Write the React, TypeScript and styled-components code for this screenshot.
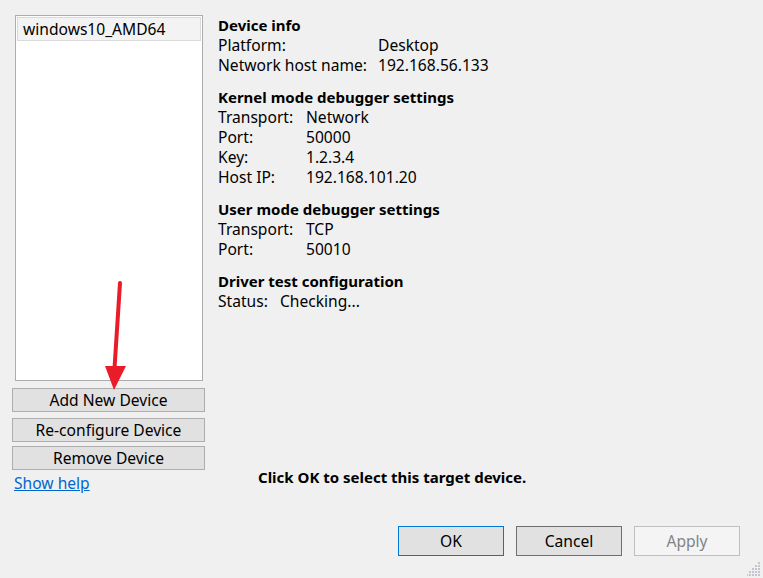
import styled, { createGlobalStyle } from 'styled-components'

const GlobalStyle = createGlobalStyle`
  html, body {
    margin: 0;
    padding: 0;
    background: #f0f0f0;
  }
  body {
    font-family: 'Noto Sans', 'Segoe UI', sans-serif;
    font-size: 15.6px;
    color: #000;
  }
`

const Window = styled.div`
  position: relative;
  height: 578px;
  display: flex;
  flex-direction: column;
  overflow: hidden;
`

const Main = styled.div`
  flex: 1;
  display: grid;
  grid-template-columns: 192px 1fr;
  column-gap: 14px;
  padding: 15px 0 0 12px;
`

const LeftColumn = styled.div`
  position: relative;
  display: flex;
  flex-direction: column;
`

const ListBox = styled.div`
  margin: 0 1px 0 3px;
  height: 366px;
  box-sizing: border-box;
  background: #fff;
  border: 1px solid #adadad;
  padding: 1px;
`

const ListItem = styled.div<{ $selected?: boolean }>`
  height: 24px;
  box-sizing: border-box;
  line-height: 22px;
  padding-left: 5px;
  background: ${(p) => (p.$selected ? '#f3f3f3' : 'transparent')};
  border: 1px solid ${(p) => (p.$selected ? '#dadada' : 'transparent')};
  white-space: nowrap;
`

const SideButton = styled.button<{ $gap: number }>`
  margin-top: ${(p) => p.$gap}px;
  height: 24px;
  width: 193px;
  padding: 0;
  font: inherit;
  color: #000;
  background: #e1e1e1;
  border: 1px solid #adadad;
  line-height: 20px;
`

const HelpLink = styled.a`
  margin: 3px 0 0 2px;
  color: #0066cc;
  text-decoration: underline;
  line-height: 20px;
  cursor: pointer;
  align-self: flex-start;
`

const Arrow = styled.svg`
  position: absolute;
  left: 90px;
  top: 265px;
  pointer-events: none;
`

const RightColumn = styled.div`
  display: flex;
  flex-direction: column;
`

const Section = styled.div`
  margin-bottom: 12px;
`

const SectionTitle = styled.div`
  font-size: 15px;
  font-weight: 700;
  line-height: 20px;
`

const Row = styled.div<{ $labelWidth: number }>`
  display: grid;
  grid-template-columns: ${(p) => p.$labelWidth}px auto;
  line-height: 20px;
  white-space: nowrap;
`

const Message = styled.div`
  margin-top: auto;
  margin-left: 40px;
  margin-bottom: 10px;
  font-size: 15px;
  font-weight: 700;
  line-height: 20px;
`

const Footer = styled.div`
  display: flex;
  justify-content: flex-end;
  gap: 12px;
  padding: 0 23px 22px 0;
  margin-top: 29px;
`

const DialogButton = styled.button<{ $variant: 'default' | 'normal' | 'disabled' }>`
  width: 106px;
  height: 30px;
  padding: 0;
  font: inherit;
  color: ${(p) => (p.$variant === 'disabled' ? '#838383' : '#000')};
  background: ${(p) => (p.$variant === 'disabled' ? '#f4f4f4' : '#e1e1e1')};
  border: 1px solid
    ${(p) =>
      p.$variant === 'default' ? '#0078d7' : p.$variant === 'normal' ? '#6f6f6f' : '#bfbfbf'};
`

const Grip = styled.svg`
  position: absolute;
  right: 2px;
  bottom: 2px;
`

type Info = { label: string; value: string }

const sections: { title: string; labelWidth: number; rows: Info[] }[] = [
  {
    title: 'Device info',
    labelWidth: 160,
    rows: [
      { label: 'Platform:', value: 'Desktop' },
      { label: 'Network host name:', value: '192.168.56.133' }
    ]
  },
  {
    title: 'Kernel mode debugger settings',
    labelWidth: 88,
    rows: [
      { label: 'Transport:', value: 'Network' },
      { label: 'Port:', value: '50000' },
      { label: 'Key:', value: '1.2.3.4' },
      { label: 'Host IP:', value: '192.168.101.20' }
    ]
  },
  {
    title: 'User mode debugger settings',
    labelWidth: 88,
    rows: [
      { label: 'Transport:', value: 'TCP' },
      { label: 'Port:', value: '50010' }
    ]
  },
  {
    title: 'Driver test configuration',
    labelWidth: 62,
    rows: [{ label: 'Status:', value: 'Checking...' }]
  }
]

export default function App() {
  return (
    <Window>
      <GlobalStyle />
      <Main>
        <LeftColumn>
          <ListBox>
            <ListItem $selected>windows10_AMD64</ListItem>
          </ListBox>
          <SideButton $gap={7}>Add New Device</SideButton>
          <SideButton $gap={6}>Re-configure Device</SideButton>
          <SideButton $gap={4}>Remove Device</SideButton>
          <HelpLink>Show help</HelpLink>
          <Arrow width="40" height="110" viewBox="0 0 40 110">
            <line x1="18" y1="3" x2="12" y2="96" stroke="#ea1c2a" strokeWidth="4" strokeLinecap="round" />
            <polygon points="3,86 24,86 12,110" fill="#ea1c2a" />
          </Arrow>
        </LeftColumn>
        <RightColumn>
          {sections.map((s) => (
            <Section key={s.title}>
              <SectionTitle>{s.title}</SectionTitle>
              {s.rows.map((r) => (
                <Row key={r.label} $labelWidth={s.labelWidth}>
                  <span>{r.label}</span>
                  <span>{r.value}</span>
                </Row>
              ))}
            </Section>
          ))}
          <Message>Click OK to select this target device.</Message>
        </RightColumn>
      </Main>
      <Footer>
        <DialogButton $variant="default">OK</DialogButton>
        <DialogButton $variant="normal">Cancel</DialogButton>
        <DialogButton $variant="disabled">Apply</DialogButton>
      </Footer>
      <Grip width="14" height="14" viewBox="0 0 14 14">
        {[
          [11, 0], [11, 3], [8, 3], [11, 6], [8, 6], [5, 6],
          [11, 9], [8, 9], [5, 9], [2, 9], [11, 12], [8, 12], [5, 12], [2, 12], [-1, 12]
        ].map(([x, y], i) => (
          <rect key={i} x={x} y={y} width="2" height="2" fill="#c4c4d0" />
        ))}
      </Grip>
    </Window>
  )
}
